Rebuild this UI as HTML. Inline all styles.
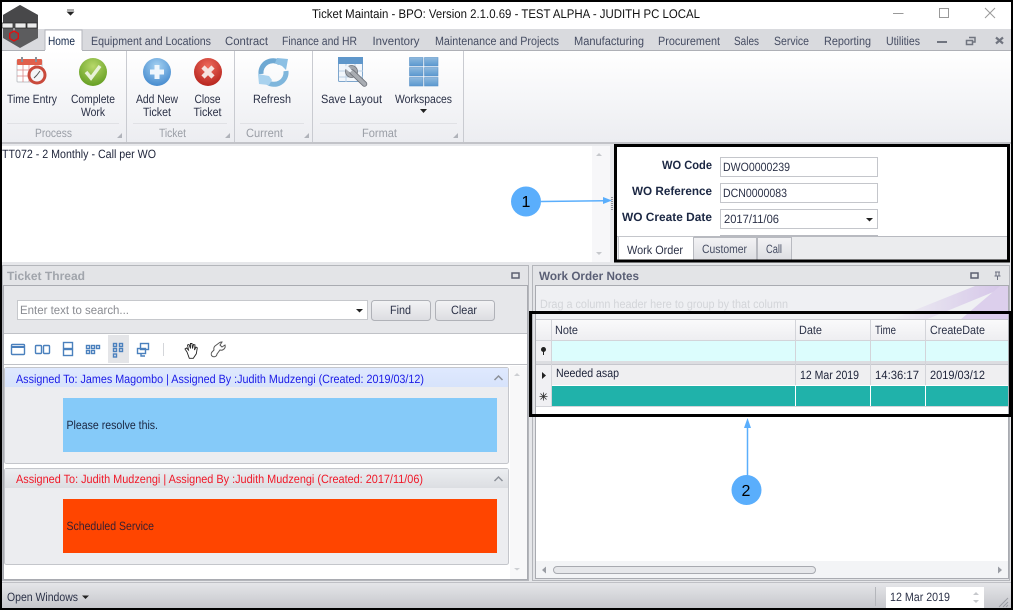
<!DOCTYPE html>
<html><head><meta charset="utf-8"><title>Ticket Maintain</title>
<style>
html,body{margin:0;padding:0;background:#fff;overflow:hidden}
svg{display:block}
text{font-family:"Liberation Sans",sans-serif;font-size:12px;fill:#2b3147}
.b{font-weight:bold}
.g{fill:#9a9ea6}
</style></head><body>
<svg width="1013" height="610" viewBox="0 0 1013 610" xmlns="http://www.w3.org/2000/svg" text-rendering="geometricPrecision">
<defs>
<linearGradient id="rib" x1="0" y1="0" x2="0" y2="1"><stop offset="0" stop-color="#fff"/><stop offset="1" stop-color="#ecedf1"/></linearGradient>
<linearGradient id="stat" x1="0" y1="0" x2="0" y2="1"><stop offset="0" stop-color="#e6e7ea"/><stop offset="1" stop-color="#c6c7cc"/></linearGradient>
<linearGradient id="btn" x1="0" y1="0" x2="0" y2="1"><stop offset="0" stop-color="#f3f3f5"/><stop offset="1" stop-color="#dcdde1"/></linearGradient>
<linearGradient id="hdr" x1="0" y1="0" x2="0" y2="1"><stop offset="0" stop-color="#fafafb"/><stop offset="1" stop-color="#eeeef1"/></linearGradient>
<linearGradient id="card1" x1="0" y1="0" x2="0" y2="1"><stop offset="0" stop-color="#dfe9fe"/><stop offset="1" stop-color="#d7e3fb"/></linearGradient>
<linearGradient id="card2" x1="0" y1="0" x2="0" y2="1"><stop offset="0" stop-color="#eceef1"/><stop offset="1" stop-color="#dcdee2"/></linearGradient>
<radialGradient id="gr" cx=".5" cy=".3" r=".75"><stop offset="0" stop-color="#b7d86a"/><stop offset="1" stop-color="#5f9a1e"/></radialGradient>
<radialGradient id="bl" cx=".5" cy=".3" r=".75"><stop offset="0" stop-color="#a6d2f2"/><stop offset="1" stop-color="#3f86cc"/></radialGradient>
<radialGradient id="rd" cx=".5" cy=".3" r=".75"><stop offset="0" stop-color="#ee6a5c"/><stop offset="1" stop-color="#b3201a"/></radialGradient>
<linearGradient id="tile" x1="0" y1="0" x2="0" y2="1"><stop offset="0" stop-color="#8fb9de"/><stop offset="1" stop-color="#5b98cf"/></linearGradient>
<linearGradient id="streak" x1="0" y1="0" x2="1" y2="0"><stop offset="0" stop-color="#eff0f3"/><stop offset="1" stop-color="#d4c4e8"/></linearGradient>
</defs>

<rect width="1013" height="610" fill="#fff"/>

<!-- title bar -->
<text x="312" y="18" style="font-size:12.500px;fill:#111" textLength="388" lengthAdjust="spacingAndGlyphs">Ticket Maintain - BPO: Version 2.1.0.69 - TEST ALPHA - JUDITH PC LOCAL</text>
<path d="M67 10h7M67.500 12h6l-3 3z" fill="#222" stroke="#222" stroke-width=".8"/>
<path d="M893 13.500h10.500" stroke="#999" fill="none"/>
<rect x="939.500" y="8.500" width="9" height="9" fill="none" stroke="#999"/>
<path d="M985 8l10 10M995 8l-10 10" stroke="#999" fill="none"/>

<!-- tab strip -->
<rect x="2" y="29" width="1009" height="22" fill="#d9dade"/>
<rect x="2" y="50" width="1009" height="1" fill="#aeb0b6"/>
<path d="M45 51V30h37v21z" fill="#fff" stroke="#b4b6bc"/>
<rect x="46" y="49" width="35" height="3" fill="#fff"/>
<text x="48" y="45" style="fill:#15294b" textLength="27" lengthAdjust="spacingAndGlyphs">Home</text>
<g>
<text x="91" y="45" textLength="120" lengthAdjust="spacingAndGlyphs" style="fill:#454c62">Equipment and Locations</text>
<text x="225" y="45" textLength="43" lengthAdjust="spacingAndGlyphs" style="fill:#454c62">Contract</text>
<text x="282" y="45" textLength="75" lengthAdjust="spacingAndGlyphs" style="fill:#454c62">Finance and HR</text>
<text x="372.500" y="45" textLength="47" lengthAdjust="spacingAndGlyphs" style="fill:#454c62">Inventory</text>
<text x="435" y="45" textLength="124" lengthAdjust="spacingAndGlyphs" style="fill:#454c62">Maintenance and Projects</text>
<text x="574" y="45" textLength="70" lengthAdjust="spacingAndGlyphs" style="fill:#454c62">Manufacturing</text>
<text x="658" y="45" textLength="62" lengthAdjust="spacingAndGlyphs" style="fill:#454c62">Procurement</text>
<text x="734" y="45" textLength="25" lengthAdjust="spacingAndGlyphs" style="fill:#454c62">Sales</text>
<text x="774" y="45" textLength="35" lengthAdjust="spacingAndGlyphs" style="fill:#454c62">Service</text>
<text x="824" y="45" textLength="47" lengthAdjust="spacingAndGlyphs" style="fill:#454c62">Reporting</text>
<text x="886" y="45" textLength="34" lengthAdjust="spacingAndGlyphs" style="fill:#454c62">Utilities</text>
</g>
<rect x="937" y="41" width="10" height="2" fill="#70747f"/>
<path d="M969 37.500h6v4.500h-2M966.500 40.500h6v4h-6z" fill="none" stroke="#70747f" stroke-width="1.500"/>
<path d="M996 37.500l7 6M1003 37.500l-7 6" stroke="#70747f" stroke-width="2.200" fill="none"/>

<!-- ribbon -->
<rect x="2" y="51" width="1009" height="91" fill="url(#rib)"/>
<rect x="2" y="142" width="1009" height="2" fill="#c2c3c8"/>
<rect x="45" y="50" width="37" height="2" fill="#fff"/>
<g fill="#c9cbd1">
<rect x="126" y="51" width="1" height="91"/><rect x="234" y="51" width="1" height="91"/><rect x="312" y="51" width="1" height="91"/><rect x="463" y="51" width="1" height="91"/>
<rect x="7" y="123" width="112" height="1" fill="#e0e1e5"/><rect x="133" y="123" width="94" height="1" fill="#e0e1e5"/><rect x="240" y="123" width="64" height="1" fill="#e0e1e5"/><rect x="320" y="123" width="137" height="1" fill="#e0e1e5"/>
</g>
<path d="M122 133v5h-5zM230 133v5h-5zM309 133v5h-5zM458 133v5h-5z" fill="#b0b3ba"/>

<!-- logo -->
<path d="M20 5L38 15V38L20 48L3 38V15Z" fill="#5c5c5e"/>
<path d="M20 5L38 15V23H3V15Z" fill="#48484a"/>
<g fill="#ececec" stroke="#222" stroke-width=".7"><rect x="2" y="23" width="11" height="5"/><rect x="15" y="23" width="11" height="5"/><rect x="27" y="23" width="10" height="5"/></g>
<path d="M14 28v3" stroke="#ddd"/>
<path d="M14 31l4.300 2.500v5L14 41l-4.300-2.500v-5z" fill="none" stroke="#e01010" stroke-width="1.400"/>

<!-- Time entry icon -->
<rect x="17" y="60" width="25" height="22" rx="1" fill="#fff" stroke="#c0c3c8"/>
<rect x="17" y="59" width="25" height="6" rx="1" fill="#e0604c"/>
<path d="M22 57v5M36 57v5" stroke="#8a8f98" stroke-width="2"/>
<path d="M17 70h25M17 76h20M23 65v17M29 65v17M35 65v8" stroke="#d88" stroke-width=".8"/>
<circle cx="37" cy="75" r="9.500" fill="#c94a3c"/><circle cx="37" cy="75" r="6.500" fill="#f4f5f7"/>
<path d="M37 75l3-4M37 75l-3 3" stroke="#555" fill="none"/>
<!-- Complete work -->
<circle cx="93" cy="72" r="14" fill="url(#gr)"/>
<path d="M86 72l5 6 9-12" fill="none" stroke="#e8f2d8" stroke-width="3.500"/>
<!-- Add -->
<circle cx="157" cy="72" r="14" fill="url(#bl)"/>
<path d="M157 65v14M150 72h14" stroke="#eef6fc" stroke-width="5"/>
<!-- Close -->
<circle cx="208" cy="72" r="14" fill="url(#rd)"/>
<path d="M203 67l10 10M213 67l-10 10" stroke="#f6e4e0" stroke-width="4.500"/>
<!-- Refresh -->
<path d="M261 74A12 12 0 0 1 280 63" fill="none" stroke="#6fa9d3" stroke-width="5"/>
<path d="M277 58l11 1-2 11-4-4-7-3z" fill="#8cc0e4"/>
<path d="M286 71A12 12 0 0 1 267 82" fill="none" stroke="#7fb6dc" stroke-width="5"/>
<path d="M258 74l11 2 3 4-3 5-10-1z" fill="#a9d2ee"/>
<!-- Save Layout -->
<rect x="338.500" y="57.500" width="24" height="24" rx="1" fill="#f2f6fb" stroke="#7ea6cd"/>
<rect x="338" y="57" width="25" height="7" fill="#5f97cb"/>
<path d="M339 71h24M339 77h24M346 64v18M355 64v10" stroke="#bcd0e4" fill="none"/>
<circle cx="351.500" cy="71.500" r="6" fill="#a3a7ad" stroke="#6c7078" stroke-width=".8"/>
<path d="M352 72L364.500 84" stroke="#6c7078" stroke-width="5.500" stroke-linecap="round"/>
<path d="M352 72L364.500 84" stroke="#a9adb3" stroke-width="3.800" stroke-linecap="round"/>
<path d="M347 64.500l5 6-2 2-5.500-4.500z" fill="#eef3f9"/>
<!-- Workspaces -->
<g fill="url(#tile)" stroke="#5b93c8" stroke-width=".6"><rect x="409.500" y="57.500" width="13.500" height="8.500"/><rect x="424.500" y="57.500" width="13.500" height="8.500"/><rect x="409.500" y="67.500" width="13.500" height="8.500"/><rect x="424.500" y="67.500" width="13.500" height="8.500"/><rect x="409.500" y="77.500" width="13.500" height="8.500"/><rect x="424.500" y="77.500" width="13.500" height="8.500"/></g>

<!-- ribbon labels -->
<text x="7" y="103" textLength="50" lengthAdjust="spacingAndGlyphs">Time Entry</text>
<text x="71" y="103" textLength="44" lengthAdjust="spacingAndGlyphs">Complete</text>
<text x="81" y="116" textLength="24" lengthAdjust="spacingAndGlyphs">Work</text>
<text x="136" y="103" textLength="42" lengthAdjust="spacingAndGlyphs">Add New</text>
<text x="143" y="116" textLength="28" lengthAdjust="spacingAndGlyphs">Ticket</text>
<text x="194.500" y="103" textLength="26" lengthAdjust="spacingAndGlyphs">Close</text>
<text x="193.500" y="116" textLength="28" lengthAdjust="spacingAndGlyphs">Ticket</text>
<text x="253" y="103" textLength="38" lengthAdjust="spacingAndGlyphs">Refresh</text>
<text x="321" y="103" textLength="61" lengthAdjust="spacingAndGlyphs">Save Layout</text>
<text x="395" y="103" textLength="57" lengthAdjust="spacingAndGlyphs">Workspaces</text>
<path d="M420 109h7l-3.500 4z" fill="#222"/>
<text class="g" x="35" y="137" textLength="37" lengthAdjust="spacingAndGlyphs">Process</text>
<text class="g" x="159" y="137" textLength="27" lengthAdjust="spacingAndGlyphs">Ticket</text>
<text class="g" x="246" y="137" textLength="37" lengthAdjust="spacingAndGlyphs">Current</text>
<text class="g" x="362" y="137" textLength="35" lengthAdjust="spacingAndGlyphs">Format</text>

<!-- top content -->
<rect x="2" y="144" width="1009" height="121" fill="#e8e9ec"/>
<rect x="2" y="146" width="608" height="116" fill="#fff"/>
<rect x="592" y="146" width="18" height="116" fill="#f7f7f9"/>
<path d="M596 156l3-3 3 3zM596 252l3 3 3-3z" fill="#c6c8cc"/>
<text x="2" y="158" textLength="154" lengthAdjust="spacingAndGlyphs" style="fill:#1c2238">TT072 - 2 Monthly - Call per WO</text>
<path d="M612 197v14" stroke="#8f929a" stroke-width="2" stroke-dasharray="1 1"/>

<rect x="616" y="146" width="392" height="90" fill="#fff"/>
<rect x="616" y="236" width="392" height="25" fill="#ebecee"/>
<rect x="616" y="236" width="392" height="1" fill="#b8bac0"/>
<g fill="#fff" stroke="#c4c6cb"><rect x="720.500" y="157.500" width="157" height="19"/><rect x="720.500" y="183.500" width="157" height="19"/><rect x="720.500" y="209.500" width="157" height="19"/></g>
<rect x="720" y="235" width="158" height="2" fill="#b8bac0"/>
<text class="b" x="662" y="169" textLength="50" lengthAdjust="spacingAndGlyphs" style="fill:#1b2743">WO Code</text>
<text class="b" x="632" y="195" textLength="80" lengthAdjust="spacingAndGlyphs" style="fill:#1b2743">WO Reference</text>
<text class="b" x="622" y="221" textLength="90" lengthAdjust="spacingAndGlyphs" style="fill:#1b2743">WO Create Date</text>
<text x="723" y="171" textLength="67" lengthAdjust="spacingAndGlyphs">DWO0000239</text>
<text x="723" y="197" textLength="64" lengthAdjust="spacingAndGlyphs">DCN0000083</text>
<text x="724" y="223" textLength="55" lengthAdjust="spacingAndGlyphs">2017/11/06</text>
<path d="M866 218h7l-3.500 3.500z" fill="#222"/>
<path d="M618.500 261V236.500h75V261z" fill="#fff" stroke="#c4c6cb"/>
<path d="M693.500 261V237.500h63V261z" fill="url(#btn)" stroke="#b8bac0"/>
<path d="M757.500 261V237.500h34V261z" fill="url(#btn)" stroke="#b8bac0"/>
<text x="627" y="254" textLength="56" lengthAdjust="spacingAndGlyphs">Work Order</text>
<text x="702" y="253" textLength="45" lengthAdjust="spacingAndGlyphs" style="fill:#454c62">Customer</text>
<text x="766" y="253" textLength="16" lengthAdjust="spacingAndGlyphs" style="fill:#454c62">Call</text>

<!-- lower background -->
<rect x="2" y="262" width="1009" height="320" fill="#e6e7ea"/>

<!-- Ticket thread panel -->
<rect x="2.500" y="265.500" width="526" height="315" fill="#e3e4e7" stroke="#b4b6bb"/>
<rect x="3.500" y="285.500" width="524" height="294" fill="#fff" stroke="#a9abb1"/>
<rect x="4" y="286" width="523" height="47" fill="#e6e7ea"/>
<rect x="4" y="333" width="523" height="1" fill="#c0c2c7"/>
<rect x="4" y="364" width="523" height="1" fill="#c0c2c7"/>
<text class="b" x="7" y="280" textLength="78" lengthAdjust="spacingAndGlyphs" style="fill:#a1a5ac">Ticket Thread</text>
<rect x="512" y="273" width="7" height="5" fill="none" stroke="#5c6070" stroke-width="1.500"/>
<rect x="17.500" y="300.500" width="350" height="19" fill="#fff" stroke="#c6c8cc"/>
<text x="20" y="314" textLength="109" lengthAdjust="spacingAndGlyphs" style="fill:#8a8c92">Enter text to search...</text>
<path d="M356 309h7l-3.500 3.500z" fill="#222"/>
<rect x="371.500" y="300.500" width="59" height="20" rx="3" fill="url(#btn)" stroke="#b0b2b8"/>
<rect x="435.500" y="300.500" width="59" height="20" rx="3" fill="url(#btn)" stroke="#b0b2b8"/>
<text x="390" y="314" textLength="21" lengthAdjust="spacingAndGlyphs">Find</text>
<text x="451" y="314" textLength="26" lengthAdjust="spacingAndGlyphs">Clear</text>

<!-- toolbar -->
<rect x="108" y="335" width="21" height="28" fill="#e4e5e8"/>
<g fill="none" stroke="#4a80bd" stroke-width="1.400">
<rect x="11.500" y="344.500" width="13" height="10" rx="1"/><path d="M11.500 347h13" stroke-width="2"/>
<rect x="35.500" y="345.500" width="6" height="8" rx="1"/><rect x="43.500" y="345.500" width="6" height="8" rx="1"/>
<rect x="63.500" y="342.500" width="9" height="6"/><rect x="63.500" y="349.500" width="9" height="6"/>
<rect x="86.500" y="345.500" width="3" height="3"/><rect x="91.500" y="345.500" width="3" height="3"/><rect x="96.500" y="345.500" width="3" height="3"/><rect x="86.500" y="350.500" width="3" height="3"/><rect x="91.500" y="350.500" width="3" height="3"/>
<rect x="113.500" y="343.500" width="3" height="3"/><rect x="119.500" y="343.500" width="3" height="3"/><rect x="113.500" y="348.500" width="3" height="3"/><rect x="119.500" y="348.500" width="3" height="3"/><rect x="113.500" y="354" width="3" height="3"/>
<rect x="140.500" y="343.500" width="8" height="6"/><rect x="137.500" y="348.500" width="8" height="5"/><path d="M141 354v2h4"/>
</g>
<path d="M163.500 343v13" stroke="#d4d6da"/>
<path d="M187 352l-2-3 1.500-1 2 2-1-5 1.500-.5 1.500 4 0-5 1.500 0 .5 5 1-4 1.500 .5-.5 5 1.500-3 1.300 .8-1 6-3 4.500h-4z" fill="#fff" stroke="#222" stroke-width=".9"/>
<path d="M212 356a3 3 0 0 1 0-4l2-2a4 4 0 0 1 1-4l4-3a4 4 0 0 1 3-1l-2 3 2 2 3-2a4 4 0 0 1-5 5l-3 4a3 3 0 0 1-5 2z" fill="#fff" stroke="#555" stroke-width="1"/>

<!-- cards -->
<rect x="4.500" y="367.500" width="504" height="96" rx="2" fill="#ecedf0" stroke="#c4c6cb"/>
<rect x="5" y="368" width="503" height="19" fill="url(#card1)"/>
<text x="16" y="383" textLength="408" lengthAdjust="spacingAndGlyphs" style="fill:#1a1ae6">Assigned To: James Magombo | Assigned By :Judith Mudzengi (Created: 2019/03/12)</text>
<path d="M494.500 380l4-4 4 4" fill="none" stroke="#8c9098" stroke-width="1.500"/>
<rect x="63" y="398" width="434" height="54" fill="#85caf9"/>
<text x="66.500" y="429" textLength="91.500" lengthAdjust="spacingAndGlyphs" style="fill:#1a2540">Please resolve this.</text>

<rect x="4.500" y="468.500" width="504" height="96" rx="2" fill="#ecedf0" stroke="#c4c6cb"/>
<rect x="5" y="469" width="503" height="19" fill="url(#card2)"/>
<text x="16" y="483" textLength="407" lengthAdjust="spacingAndGlyphs" style="fill:#f01828">Assigned To: Judith Mudzengi | Assigned By :Judith Mudzengi (Created: 2017/11/06)</text>
<path d="M494.500 481l4-4 4 4" fill="none" stroke="#8c9098" stroke-width="1.500"/>
<rect x="63" y="499" width="434" height="54" fill="#ff4500"/>
<text x="66.500" y="530" textLength="87.500" lengthAdjust="spacingAndGlyphs" style="fill:#3a2030">Scheduled Service</text>
<rect x="510" y="366" width="17" height="213" fill="#f8f8f9"/>
<path d="M514 376l3-3 3 3zM514 568l3 2.500 3-2.500z" fill="#cdcfd3"/>

<!-- Work order notes panel -->
<rect x="532.500" y="265.500" width="477" height="315" fill="#e3e4e7" stroke="#b4b6bb"/>
<rect x="535.500" y="285.500" width="473" height="293" fill="#fff" stroke="#a9abb1"/>
<rect x="536" y="286" width="472" height="34" fill="#eff0f3"/>
<path d="M890 320L975 286h33L925 320z" fill="url(#streak)"/>
<path d="M960 320L1000 286h8v34z" fill="#dccfec"/>
<text class="b" x="539" y="280" textLength="100" lengthAdjust="spacingAndGlyphs" style="fill:#5a5f75">Work Order Notes</text>
<rect x="971" y="273" width="7" height="5" fill="none" stroke="#5c6070" stroke-width="1.500"/>
<path d="M995 272h5M996 272v4h3v-4M994.500 276h6M997.500 276v4" stroke="#6c7080" fill="none"/>
<text x="540" y="308" textLength="248" lengthAdjust="spacingAndGlyphs" style="fill:#d3d5d9">Drag a column header here to group by that column</text>

<!-- grid -->
<rect x="536" y="320" width="472" height="20" fill="url(#hdr)"/>
<rect x="536" y="319" width="472" height="1" fill="#c8c9cf"/>
<rect x="536" y="340" width="16" height="66" fill="#f0f0f3"/>
<rect x="552" y="341" width="456" height="20" fill="#dcfdfd"/>
<rect x="536" y="361" width="472" height="3" fill="#dcdde1"/>
<rect x="536" y="364" width="472" height="1" fill="#c6c7cd"/>
<rect x="552" y="365" width="456" height="20" fill="#efeff1"/>
<rect x="552" y="386" width="456" height="20" fill="#20b2aa"/>
<g fill="#d3d4d9"><rect x="551" y="320" width="1" height="86"/><rect x="795" y="320" width="1" height="86"/><rect x="870" y="320" width="1" height="86"/><rect x="925" y="320" width="1" height="86"/><rect x="536" y="340" width="472" height="1"/></g>
<g fill="#fff"><rect x="795" y="386" width="1" height="20"/><rect x="870" y="386" width="1" height="20"/><rect x="925" y="386" width="1" height="20"/><rect x="552" y="385" width="456" height="1"/></g>
<rect x="536" y="406" width="472" height="1" fill="#d3d4d9"/>
<text x="555" y="334" textLength="23" lengthAdjust="spacingAndGlyphs">Note</text>
<text x="799" y="334" textLength="23" lengthAdjust="spacingAndGlyphs">Date</text>
<text x="875" y="334" textLength="21" lengthAdjust="spacingAndGlyphs">Time</text>
<text x="930" y="334" textLength="55" lengthAdjust="spacingAndGlyphs">CreateDate</text>
<text x="556" y="377" textLength="63" lengthAdjust="spacingAndGlyphs" style="fill:#1c2238">Needed asap</text>
<text x="800" y="379" textLength="59" lengthAdjust="spacingAndGlyphs" style="fill:#1c2238">12 Mar 2019</text>
<text x="875" y="379" textLength="44" lengthAdjust="spacingAndGlyphs" style="fill:#1c2238">14:36:17</text>
<text x="930" y="379" textLength="55" lengthAdjust="spacingAndGlyphs" style="fill:#1c2238">2019/03/12</text>
<path d="M541.500 349.500a2 2 0 1 1 4 0 2 2 0 0 1-4 0zM543.500 351v4" fill="#222" stroke="#222"/>
<path d="M542 372l4 3.500-4 3.500z" fill="#222"/>
<path d="M540.500 393.500l6 6M546.500 393.500l-6 6M543.500 392.500v8M539.500 396.500h8" stroke="#333" stroke-width=".8"/>

<!-- horizontal scrollbar -->
<rect x="536" y="561" width="472" height="17" fill="#f3f4f6"/>
<rect x="553.500" y="566.500" width="262" height="7" rx="3.500" fill="#e6e7ea" stroke="#a8aab0"/>
<path d="M546 566.500l-4 3.500 4 3.500zM998 566.500l4 3.500-4 3.500z" fill="#9a9da4"/>

<!-- status bar -->
<rect x="2" y="582" width="1009" height="26" fill="url(#stat)"/>
<rect x="2" y="582" width="1009" height="1" fill="#bfc0c5"/>
<text x="7" y="601" textLength="71" lengthAdjust="spacingAndGlyphs">Open Windows</text>
<path d="M82 595.500h7l-3.500 3.500z" fill="#222"/>
<rect x="875" y="587" width="1" height="19" fill="#b4b6bb"/>
<rect x="886" y="587" width="98" height="21" fill="#fff"/>
<text x="890" y="601" textLength="60" lengthAdjust="spacingAndGlyphs">12 Mar 2019</text>
<path d="M973 595l3-3 3 3zM973 600l3 3 3-3z" fill="#c6c8cc"/>
<path d="M999 607l9-9M1003 607l5-5M1006 607l2-2" stroke="#9a9da4" fill="none"/>

<!-- annotations -->
<rect x="615.500" y="145.500" width="393" height="115.500" fill="none" stroke="#000" stroke-width="3"/>
<rect x="530.500" y="312.500" width="480" height="103" fill="none" stroke="#000" stroke-width="3"/>
<path d="M541 201.500L604 200.700" stroke="#5aaefc" stroke-width="1.500" fill="none"/>
<path d="M612 200.500l-9-3.500v7z" fill="#5aaefc"/>
<circle cx="526" cy="201.500" r="15" fill="#5aaefc"/>
<text x="526" y="207" text-anchor="middle" style="font-size:16px;fill:#000">1</text>
<path d="M747.500 476V426" stroke="#5aaefc" stroke-width="1.500" fill="none"/>
<path d="M747.500 418l-3.500 10h7z" fill="#5aaefc"/>
<circle cx="746.500" cy="490" r="15" fill="#5aaefc"/>
<text x="746" y="496" text-anchor="middle" style="font-size:16px;fill:#000">2</text>

<!-- outer frame -->
<rect x="1" y="1" width="1011" height="608" fill="none" stroke="#000" stroke-width="2"/>
</svg>
</body></html>
